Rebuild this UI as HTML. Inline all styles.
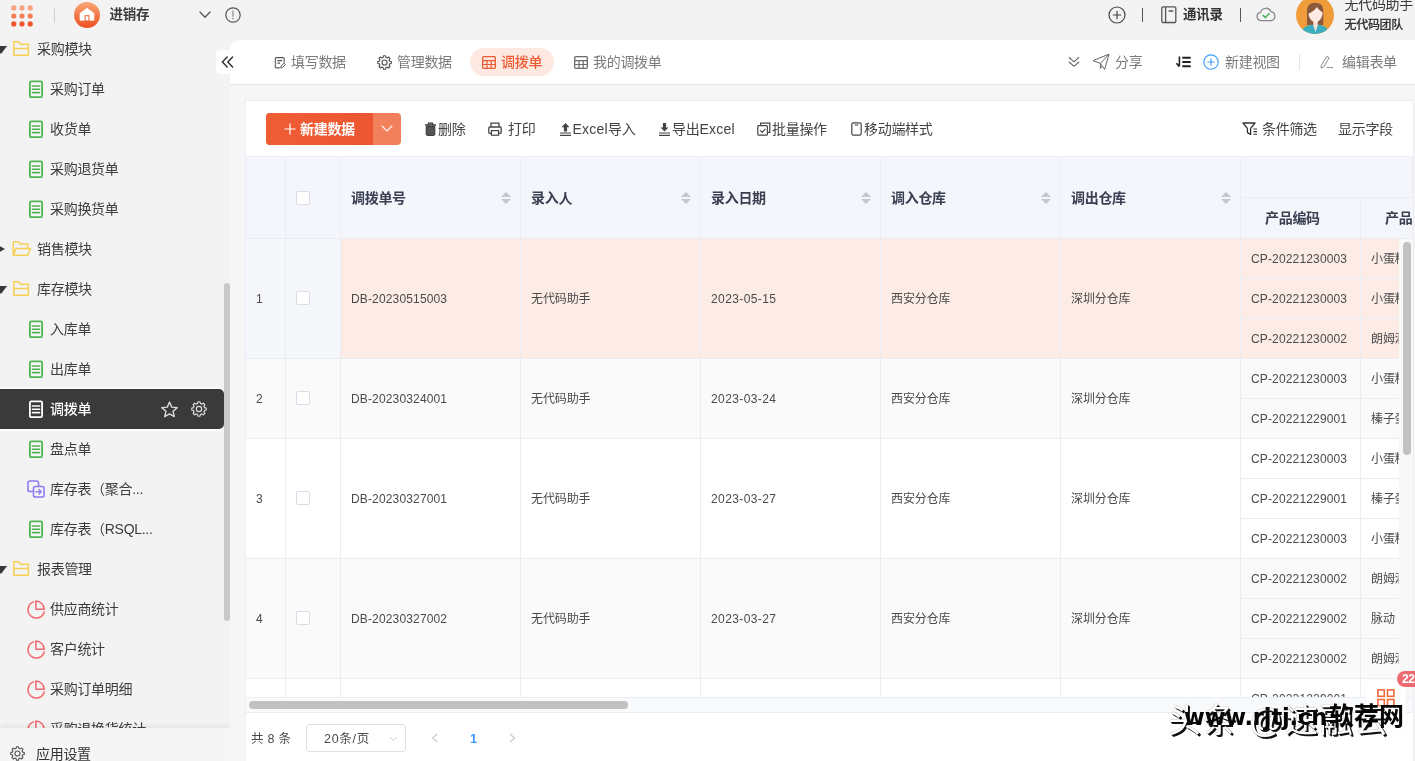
<!DOCTYPE html>
<html lang="zh-CN">
<head>
<meta charset="utf-8">
<title>进销存 - 调拨单</title>
<style>
*{box-sizing:border-box;margin:0;padding:0}
html,body{width:1415px;height:761px;overflow:hidden}
body{position:relative;background:#f3f3f3;font-family:"Liberation Sans","Noto Sans CJK SC",sans-serif;font-size:14px;color:#333;letter-spacing:-0.300px;-webkit-font-smoothing:antialiased}
.abs{position:absolute}
svg{display:block;overflow:visible}
/* top bar */
#top{position:absolute;left:0;top:0;width:1415px;height:40px;background:#f3f3f3}
.t{position:absolute;white-space:nowrap;line-height:20px}
/* sidebar */
#side{position:absolute;left:0;top:40px;width:230px;height:721px;background:#f3f3f3;overflow:hidden}
.it{position:absolute;left:0;width:224px;height:40px}
.it .tx{position:absolute;left:50px;top:10px;line-height:20px;font-size:14px;color:#3c3c3c;white-space:nowrap}
.it.g .tx{left:37px}
.it .ic{position:absolute;left:27px;top:11px;width:18px;height:18px}
.it.g .ic{left:12px}
.it.g .tri{position:absolute;left:-5.500px;top:17px;width:0;height:0;border-left:6px solid transparent;border-right:6px solid transparent;border-top:8px solid #3a3a3a}
.it.g.closed .tri{left:-2.500px;top:15.500px;border-top:4px solid transparent;border-bottom:4px solid transparent;border-left:7px solid #3a3a3a;border-right:0}
.it.act{background:#3a3a3a;border-radius:0 5px 5px 0;box-shadow:0 0 0 2px #fafafa}
.it.act .tx{color:#fff;font-weight:500}
/* main */
#tabbar{position:absolute;left:230px;top:40px;width:1185px;height:45px;background:#fff;border-radius:10px 0 0 0;border-bottom:1px solid #e4e4e4}
#mainbg{position:absolute;left:230px;top:85px;width:1185px;height:676px;background:#f6f6f6}
#card{position:absolute;left:245px;top:100px;width:1169px;height:670px;background:#fff;border:1px solid #ecedf6}
.tab{position:absolute;top:12px;line-height:20px;font-size:14px;color:#7a7a7a;white-space:nowrap}
.tb{position:absolute;top:119px;line-height:20px;font-size:14px;color:#333;white-space:nowrap}
/* table */
.hd{position:absolute;background:#f5f6fb;border-right:1px solid #ebedf5;border-bottom:1px solid #ebedf5}
.hd .h{position:absolute;left:10px;font-weight:bold;font-size:14px;color:#3a4052;line-height:20px;white-space:nowrap}
.sort{position:absolute;right:9px;width:10px;height:14px}
.sort:before,.sort:after{content:"";position:absolute;left:0;border-left:5px solid transparent;border-right:5px solid transparent}
.sort:before{top:0;border-bottom:5px solid #c3c7cf}
.sort:after{top:7px;border-top:5px solid #c3c7cf}
.c{position:absolute;border-right:1px solid #ebedf5;border-bottom:1px solid #ebedf5;font-size:12px;color:#4a4a4a;white-space:nowrap;overflow:hidden}
.c span{position:absolute;left:10px;line-height:20px;letter-spacing:-0.100px}
.c span.l{letter-spacing:0.150px}
.c span.d{letter-spacing:0.400px}
.cb{position:absolute;width:14px;height:14px;background:#fff;border:1px solid #d9dde8;border-radius:2px}
#root{position:absolute;left:0;top:0;width:1415px;height:761px;overflow:hidden;will-change:transform}
</style>
</head>
<body>
<div id="root">
<div id="top">
<div class="abs" style="left:0px;top:0px"><svg width="44" height="32" viewBox="0 0 44 32" style=""><circle cx="13.8" cy="7.9" r="2.6" fill="#f8a480"/><circle cx="22" cy="7.9" r="2.6" fill="#f8a480"/><circle cx="30.2" cy="7.9" r="2.6" fill="#f8a480"/><circle cx="13.8" cy="16" r="2.6" fill="#f47d55"/><circle cx="22" cy="16" r="2.6" fill="#f47d55"/><circle cx="30.2" cy="16" r="2.6" fill="#f47d55"/><circle cx="13.8" cy="23.9" r="2.6" fill="#f0562d"/><circle cx="22" cy="23.9" r="2.6" fill="#f0562d"/><circle cx="30.2" cy="23.9" r="2.6" fill="#f0562d"/></svg></div>
<div class="abs" style="left:54px;top:8px;width:1px;height:15px;background:#cfcfcf"></div>
<div class="abs" style="left:74px;top:2px"><svg width="26" height="26" viewBox="0 0 26 26" style=""><defs><linearGradient id="hg" x1="0" y1="0" x2="0" y2="1"><stop offset="0" stop-color="#f8a777"/><stop offset="1" stop-color="#ee4d20"/></linearGradient></defs><circle cx="13" cy="13" r="13" fill="url(#hg)"/><path d="M13 6.300L19.900 11.400V18.200H6.100V11.400Z" fill="#fff" stroke="#fff" stroke-width="0.800" stroke-linejoin="round"/><rect x="11.100" y="13.700" width="3.800" height="5.200" fill="#fff" stroke="#f0703f" stroke-width="1.100"/></svg></div>
<div class="t" style="left:109.5px;top:5.0px;font-size:13.5px;color:#3a3a3a;font-weight:bold;">进销存</div>
<div class="abs" style="left:199px;top:11px"><svg width="12" height="8" viewBox="0 0 12 8" style=""><path d="M1 1l5 5.2L11 1" fill="none" stroke="#555" stroke-width="1.3" stroke-linecap="round" stroke-linejoin="round"/></svg></div>
<div class="abs" style="left:225px;top:7px"><svg width="16" height="16" viewBox="0 0 16 16" style=""><circle cx="8" cy="8" r="7.2" fill="none" stroke="#555" stroke-width="1.2"/><path d="M8 4v5.2" stroke="#999" stroke-width="1.4" stroke-linecap="round"/><circle cx="8" cy="11.6" r="0.9" fill="#999"/></svg></div>
<div class="abs" style="left:1108px;top:6px"><svg width="18" height="18" viewBox="0 0 18 18" style=""><circle cx="9" cy="9" r="8" fill="none" stroke="#444" stroke-width="1.2"/><path d="M9 5.3v7.4M5.3 9h7.4" stroke="#444" stroke-width="1.2" stroke-linecap="round"/></svg></div>
<div class="abs" style="left:1142px;top:8px;width:1px;height:14px;background:#555"></div>
<div class="abs" style="left:1161px;top:6px"><svg width="16" height="18" viewBox="0 0 16 18" style=""><rect x="0.8" y="0.8" width="14" height="15.6" rx="1.2" fill="none" stroke="#555" stroke-width="1.3"/><path d="M4.6 0.8v15.6M7.6 5h4.6" stroke="#555" stroke-width="1.3" fill="none"/><path d="M1.5 17.6h13" stroke="#bbb" stroke-width="1"/></svg></div>
<div class="t" style="left:1183px;top:5.0px;font-size:13.5px;color:#333;font-weight:bold;">通讯录</div>
<div class="abs" style="left:1240px;top:8px;width:1px;height:14px;background:#555"></div>
<div class="abs" style="left:1256px;top:7px"><svg width="20" height="15" viewBox="0 0 20 15" style=""><path d="M5 13.6a4.2 4.2 0 0 1-.5-8.3A5.6 5.6 0 0 1 15 4.6a4.6 4.6 0 0 1 .4 9z" fill="#f3f3f3" stroke="#8a8a8a" stroke-width="1.3" stroke-linejoin="round"/><path d="M7.2 8.4l2.2 2.2 3.8-4" fill="none" stroke="#4cb85c" stroke-width="1.5" stroke-linecap="round" stroke-linejoin="round"/></svg></div>
<div class="abs" style="left:1296px;top:-4px"><svg width="38" height="38" viewBox="0 0 38 38" style=""><defs><clipPath id="av"><circle cx="19" cy="19" r="19"/></clipPath></defs><g clip-path="url(#av)"><rect width="38" height="38" fill="#f09c3b"/><path d="M11 29V15C11 9.500 14 6.800 19.200 6.800C24.500 6.800 27.300 9.500 27.300 15V29Z" fill="#8b5a3d"/><path d="M5 38C6 31.500 11 29.500 16.500 28.600L19.500 31L22.500 28.600C28 29.500 32 31.500 33 38Z" fill="#3bafc0"/><path d="M17.300 22H21.700V29.500L19.500 36L17.300 29.500Z" fill="#fbe3d8"/><path d="M12.600 17.500C15.500 16.500 19 14 20.800 11C22.500 13.500 25 15.500 26.600 16.200C26.800 21 23.500 26.200 19.800 26.200C16 26.200 12.600 22 12.600 17.500Z" fill="#fdebe3"/></g></svg></div>
<div class="t" style="left:1344.5px;top:-6.0px;font-size:14px;color:#3a3a3a;font-weight:normal;">无代码助手</div>
<div class="t" style="left:1344.5px;top:15.0px;font-size:12px;color:#333;font-weight:500;-webkit-text-stroke:0.200px #333">无代码团队</div>
</div>
<div id="side">
<div class="it g" style="top:-11px"><i class="tri"></i><div class="ic"><svg width="18" height="18" viewBox="0 0 18 18" style=""><path d="M1.850 15.250V1.750H6.800L8.600 4.200H16.350V15.250Z" fill="none" stroke="#f6d055" stroke-width="1.500" stroke-linejoin="round"/><path d="M1.850 8.500H16.350" stroke="#f6d055" stroke-width="1.400"/></svg></div><div class="tx">采购模块</div></div>
<div class="it" style="top:29px"><div class="ic"><svg width="18" height="18" viewBox="0 0 18 18" style=""><rect x="2.900" y="1.400" width="12.200" height="15.800" rx="1.400" fill="#fbf6fb" stroke="#4db550" stroke-width="1.800"/><path d="M5.400 6h7.200M5.400 9.300h7.200M5.400 12.600h7.200" stroke="#4db550" stroke-width="1.600" stroke-linecap="round" fill="none"/></svg></div><div class="tx">采购订单</div></div>
<div class="it" style="top:69px"><div class="ic"><svg width="18" height="18" viewBox="0 0 18 18" style=""><rect x="2.900" y="1.400" width="12.200" height="15.800" rx="1.400" fill="#fbf6fb" stroke="#4db550" stroke-width="1.800"/><path d="M5.400 6h7.200M5.400 9.300h7.200M5.400 12.600h7.200" stroke="#4db550" stroke-width="1.600" stroke-linecap="round" fill="none"/></svg></div><div class="tx">收货单</div></div>
<div class="it" style="top:109px"><div class="ic"><svg width="18" height="18" viewBox="0 0 18 18" style=""><rect x="2.900" y="1.400" width="12.200" height="15.800" rx="1.400" fill="#fbf6fb" stroke="#4db550" stroke-width="1.800"/><path d="M5.400 6h7.200M5.400 9.300h7.200M5.400 12.600h7.200" stroke="#4db550" stroke-width="1.600" stroke-linecap="round" fill="none"/></svg></div><div class="tx">采购退货单</div></div>
<div class="it" style="top:149px"><div class="ic"><svg width="18" height="18" viewBox="0 0 18 18" style=""><rect x="2.900" y="1.400" width="12.200" height="15.800" rx="1.400" fill="#fbf6fb" stroke="#4db550" stroke-width="1.800"/><path d="M5.400 6h7.200M5.400 9.300h7.200M5.400 12.600h7.200" stroke="#4db550" stroke-width="1.600" stroke-linecap="round" fill="none"/></svg></div><div class="tx">采购换货单</div></div>
<div class="it g closed" style="top:189px"><i class="tri"></i><div class="ic"><svg width="20" height="18" viewBox="0 0 20 18" style=""><path d="M1.300 15.250V1.750H6.300L8.100 4.100H15.600V8.200" fill="none" stroke="#f6d055" stroke-width="1.500" stroke-linejoin="round"/><path d="M1.300 15.250L4 8.400H18.400L15.800 15.250Z" fill="none" stroke="#f6d055" stroke-width="1.500" stroke-linejoin="round"/></svg></div><div class="tx">销售模块</div></div>
<div class="it g" style="top:229px"><i class="tri"></i><div class="ic"><svg width="18" height="18" viewBox="0 0 18 18" style=""><path d="M1.850 15.250V1.750H6.800L8.600 4.200H16.350V15.250Z" fill="none" stroke="#f6d055" stroke-width="1.500" stroke-linejoin="round"/><path d="M1.850 8.500H16.350" stroke="#f6d055" stroke-width="1.400"/></svg></div><div class="tx">库存模块</div></div>
<div class="it" style="top:269px"><div class="ic"><svg width="18" height="18" viewBox="0 0 18 18" style=""><rect x="2.900" y="1.400" width="12.200" height="15.800" rx="1.400" fill="#fbf6fb" stroke="#4db550" stroke-width="1.800"/><path d="M5.400 6h7.200M5.400 9.300h7.200M5.400 12.600h7.200" stroke="#4db550" stroke-width="1.600" stroke-linecap="round" fill="none"/></svg></div><div class="tx">入库单</div></div>
<div class="it" style="top:309px"><div class="ic"><svg width="18" height="18" viewBox="0 0 18 18" style=""><rect x="2.900" y="1.400" width="12.200" height="15.800" rx="1.400" fill="#fbf6fb" stroke="#4db550" stroke-width="1.800"/><path d="M5.400 6h7.200M5.400 9.300h7.200M5.400 12.600h7.200" stroke="#4db550" stroke-width="1.600" stroke-linecap="round" fill="none"/></svg></div><div class="tx">出库单</div></div>
<div class="it act" style="top:349px"><div class="ic"><svg width="18" height="18" viewBox="0 0 18 18" style=""><rect x="2.900" y="1.400" width="12.200" height="15.800" rx="1.400" fill="none" stroke="#fff" stroke-width="1.800"/><path d="M5.400 6h7.200M5.400 9.300h7.200M5.400 12.600h7.200" stroke="#fff" stroke-width="1.600" stroke-linecap="round" fill="none"/></svg></div><div class="tx">调拨单</div><div class="abs" style="left:161px;top:12px"><svg width="17" height="17" viewBox="0 0 16 16" style=""><path d="M8.00 1.00 L10.06 5.77 L15.23 6.25 L11.33 9.68 L12.47 14.75 L8.00 12.10 L3.53 14.75 L4.67 9.68 L0.77 6.25 L5.94 5.77Z" fill="none" stroke="#ddd" stroke-width="1.3" stroke-linejoin="round"/></svg></div><div class="abs" style="left:191px;top:12px"><svg width="16" height="16" viewBox="0 0 16 16" style=""><path d="M6.97 0.77 L9.03 0.77 L9.42 2.48 L10.90 3.09 L12.38 2.16 L13.84 3.62 L12.91 5.10 L13.52 6.58 L15.23 6.97 L15.23 9.03 L13.52 9.42 L12.91 10.90 L13.84 12.38 L12.38 13.84 L10.90 12.91 L9.42 13.52 L9.03 15.23 L6.97 15.23 L6.58 13.52 L5.10 12.91 L3.62 13.84 L2.16 12.38 L3.09 10.90 L2.48 9.42 L0.77 9.03 L0.77 6.97 L2.48 6.58 L3.09 5.10 L2.16 3.62 L3.62 2.16 L5.10 3.09 L6.58 2.48Z" fill="none" stroke="#ddd" stroke-width="1.2" stroke-linejoin="round"/><circle cx="8" cy="8" r="2.7" fill="none" stroke="#ddd" stroke-width="1.2"/></svg></div></div>
<div class="it" style="top:389px"><div class="ic"><svg width="18" height="18" viewBox="0 0 18 18" style=""><rect x="2.900" y="1.400" width="12.200" height="15.800" rx="1.400" fill="#fbf6fb" stroke="#4db550" stroke-width="1.800"/><path d="M5.400 6h7.200M5.400 9.300h7.200M5.400 12.600h7.200" stroke="#4db550" stroke-width="1.600" stroke-linecap="round" fill="none"/></svg></div><div class="tx">盘点单</div></div>
<div class="it" style="top:429px"><div class="ic"><svg width="18" height="18" viewBox="0 0 18 18" style=""><rect x="1" y="1" width="10.5" height="10.5" rx="1.8" fill="none" stroke="#8c7df2" stroke-width="1.6"/><rect x="6.5" y="6.5" width="10.5" height="10.5" rx="1.8" fill="#f3f3f3" stroke="#8c7df2" stroke-width="1.6"/><path d="M9 11.8h5M12 9.6l2.2 2.2L12 14" fill="none" stroke="#8c7df2" stroke-width="1.4" stroke-linecap="round" stroke-linejoin="round"/></svg></div><div class="tx">库存表（聚合...</div></div>
<div class="it" style="top:469px"><div class="ic"><svg width="18" height="18" viewBox="0 0 18 18" style=""><rect x="2.900" y="1.400" width="12.200" height="15.800" rx="1.400" fill="#fbf6fb" stroke="#4db550" stroke-width="1.800"/><path d="M5.400 6h7.200M5.400 9.300h7.200M5.400 12.600h7.200" stroke="#4db550" stroke-width="1.600" stroke-linecap="round" fill="none"/></svg></div><div class="tx">库存表（RSQL...</div></div>
<div class="it g" style="top:509px"><i class="tri"></i><div class="ic"><svg width="18" height="18" viewBox="0 0 18 18" style=""><path d="M1.850 15.250V1.750H6.800L8.600 4.200H16.350V15.250Z" fill="none" stroke="#f6d055" stroke-width="1.500" stroke-linejoin="round"/><path d="M1.850 8.500H16.350" stroke="#f6d055" stroke-width="1.400"/></svg></div><div class="tx">报表管理</div></div>
<div class="it" style="top:549px"><div class="ic"><svg width="18" height="18" viewBox="0 0 18 18" style=""><path d="M6.600 1.900A8.300 8.300 0 1 0 17.300 12" fill="none" stroke="#f2676d" stroke-width="1.500" stroke-linecap="round"/><path d="M8.900 9.300V1.100A8.300 8.300 0 0 1 17.200 9.300Z" fill="none" stroke="#f2676d" stroke-width="1.500" stroke-linejoin="round"/></svg></div><div class="tx">供应商统计</div></div>
<div class="it" style="top:589px"><div class="ic"><svg width="18" height="18" viewBox="0 0 18 18" style=""><path d="M6.600 1.900A8.300 8.300 0 1 0 17.300 12" fill="none" stroke="#f2676d" stroke-width="1.500" stroke-linecap="round"/><path d="M8.900 9.300V1.100A8.300 8.300 0 0 1 17.200 9.300Z" fill="none" stroke="#f2676d" stroke-width="1.500" stroke-linejoin="round"/></svg></div><div class="tx">客户统计</div></div>
<div class="it" style="top:629px"><div class="ic"><svg width="18" height="18" viewBox="0 0 18 18" style=""><path d="M6.600 1.900A8.300 8.300 0 1 0 17.300 12" fill="none" stroke="#f2676d" stroke-width="1.500" stroke-linecap="round"/><path d="M8.900 9.300V1.100A8.300 8.300 0 0 1 17.200 9.300Z" fill="none" stroke="#f2676d" stroke-width="1.500" stroke-linejoin="round"/></svg></div><div class="tx">采购订单明细</div></div>
<div class="it" style="top:669px"><div class="ic"><svg width="18" height="18" viewBox="0 0 18 18" style=""><path d="M6.600 1.900A8.300 8.300 0 1 0 17.300 12" fill="none" stroke="#f2676d" stroke-width="1.500" stroke-linecap="round"/><path d="M8.900 9.300V1.100A8.300 8.300 0 0 1 17.200 9.300Z" fill="none" stroke="#f2676d" stroke-width="1.500" stroke-linejoin="round"/></svg></div><div class="tx">采购退换货统计</div></div>
<div class="abs" style="left:224px;top:243px;width:6px;height:338px;border-radius:3px;background:#c9c9c9"></div>
<div class="abs" style="left:0;top:688px;width:230px;height:33px;background:#f5f5f5;box-shadow:0 -2px 5px rgba(0,0,0,0.07)"></div>
<div class="abs" style="left:10px;top:706px"><svg width="15" height="15" viewBox="0 0 16 16" style=""><path d="M6.97 0.77 L9.03 0.77 L9.42 2.48 L10.90 3.09 L12.38 2.16 L13.84 3.62 L12.91 5.10 L13.52 6.58 L15.23 6.97 L15.23 9.03 L13.52 9.42 L12.91 10.90 L13.84 12.38 L12.38 13.84 L10.90 12.91 L9.42 13.52 L9.03 15.23 L6.97 15.23 L6.58 13.52 L5.10 12.91 L3.62 13.84 L2.16 12.38 L3.09 10.90 L2.48 9.42 L0.77 9.03 L0.77 6.97 L2.48 6.58 L3.09 5.10 L2.16 3.62 L3.62 2.16 L5.10 3.09 L6.58 2.48Z" fill="none" stroke="#555" stroke-width="1.2" stroke-linejoin="round"/><circle cx="8" cy="8" r="2.7" fill="none" stroke="#555" stroke-width="1.2"/></svg></div>
<div class="t" style="left:36px;top:704px;font-size:14px;color:#333">应用设置</div>
</div>
<div id="tabbar">
</div>
<div class="abs" style="left:216px;top:50px;width:18px;height:24px;background:#fff;border-radius:4px 0 0 4px"></div>
<div class="abs" style="left:221px;top:56px"><svg width="13" height="12" viewBox="0 0 13 12" style=""><path d="M6.2 1L1.4 6l4.800 5M11.600 1L6.800 6l4.800 5" fill="none" stroke="#333" stroke-width="1.5" stroke-linecap="round" stroke-linejoin="round"/></svg></div>
<div class="abs" style="left:273.5px;top:55.5px"><svg width="11.5" height="13.5" viewBox="0 0 13 14" style=""><path d="M11.500 7V2.200a1 1 0 0 0-1-1h-8a1 1 0 0 0-1 1v9.600a1 1 0 0 0 1 1h4" fill="none" stroke="#555" stroke-width="1.2"/><path d="M3.800 4.600h5.400M3.800 7.400h3" stroke="#555" stroke-width="1.2"/><path d="M7.600 12.800l.4-2 3.400-3.300 1.500 1.500-3.400 3.400z" fill="none" stroke="#555" stroke-width="1.100" stroke-linejoin="round"/></svg></div>
<div class="t" style="left:291px;top:52.0px;font-size:14px;color:#7b7b7b;font-weight:normal;">填写数据</div>
<div class="abs" style="left:376.5px;top:54.5px"><svg width="15" height="15" viewBox="0 0 16 16" style=""><path d="M6.97 0.77 L9.03 0.77 L9.42 2.48 L10.90 3.09 L12.38 2.16 L13.84 3.62 L12.91 5.10 L13.52 6.58 L15.23 6.97 L15.23 9.03 L13.52 9.42 L12.91 10.90 L13.84 12.38 L12.38 13.84 L10.90 12.91 L9.42 13.52 L9.03 15.23 L6.97 15.23 L6.58 13.52 L5.10 12.91 L3.62 13.84 L2.16 12.38 L3.09 10.90 L2.48 9.42 L0.77 9.03 L0.77 6.97 L2.48 6.58 L3.09 5.10 L2.16 3.62 L3.62 2.16 L5.10 3.09 L6.58 2.48Z" fill="none" stroke="#555" stroke-width="1.25" stroke-linejoin="round"/><circle cx="8" cy="8" r="2.7" fill="none" stroke="#555" stroke-width="1.25"/></svg></div>
<div class="t" style="left:397px;top:52.0px;font-size:14px;color:#7b7b7b;font-weight:normal;">管理数据</div>
<div class="abs" style="left:470px;top:48px;width:84px;height:28px;border-radius:14px;background:#fde9e1"></div>
<div class="abs" style="left:482px;top:55.5px"><svg width="14" height="13" viewBox="0 0 14 13" style=""><rect x="0.700" y="0.700" width="12.600" height="11.600" rx="1" fill="none" stroke="#ee5a31" stroke-width="1.300"/><path d="M0.700 4.600h12.600M0.700 8.500h12.600M5 4.600v7.700M9.200 4.600v7.700" stroke="#ee5a31" stroke-width="1.200" fill="none"/></svg></div>
<div class="t" style="left:501px;top:52.0px;font-size:14px;color:#ee5a31;font-weight:500;">调拨单</div>
<div class="abs" style="left:574px;top:55.5px"><svg width="14" height="13" viewBox="0 0 14 13" style=""><rect x="0.700" y="0.700" width="12.600" height="11.600" rx="1" fill="none" stroke="#6a6a6a" stroke-width="1.300"/><path d="M0.700 4.600h12.600M0.700 8.500h12.600M5 4.600v7.700M9.200 4.600v7.700" stroke="#6a6a6a" stroke-width="1.200" fill="none"/></svg></div>
<div class="t" style="left:593px;top:52.0px;font-size:14px;color:#7b7b7b;font-weight:normal;">我的调拨单</div>
<div class="abs" style="left:1068px;top:56px"><svg width="12" height="12" viewBox="0 0 12 12" style=""><path d="M1.200 1.500L6 5.800l4.800-4.300M1.200 6L6 10.300 10.800 6" fill="none" stroke="#666" stroke-width="1.100" stroke-linecap="round" stroke-linejoin="round"/></svg></div>
<div class="abs" style="left:1092px;top:53px"><svg width="18" height="18" viewBox="0 0 18 18" style=""><path d="M1 7.600L17 1.200 12.600 16.400 8.400 10.400z" fill="none" stroke="#666" stroke-width="1" stroke-linejoin="round"/><path d="M17 1.200L8.400 10.400v5l2.200-2.400" fill="none" stroke="#666" stroke-width="1" stroke-linejoin="round"/></svg></div>
<div class="t" style="left:1115px;top:52.0px;font-size:14px;color:#7b7b7b;font-weight:normal;">分享</div>
<div class="abs" style="left:1176px;top:56px"><svg width="15" height="12" viewBox="0 0 15 12" style=""><path d="M6.300 1.700h8.400M6.300 6h8.400M6.300 10.300h8.400" stroke="#222" stroke-width="2"/><path d="M3.400 0.500v9.500M0.400 7.200l3 3.400" fill="none" stroke="#222" stroke-width="1.600"/></svg></div>
<div class="abs" style="left:1203px;top:54px"><svg width="16" height="16" viewBox="0 0 16 16" style=""><circle cx="8" cy="8" r="7.200" fill="none" stroke="#409eff" stroke-width="1.150"/><path d="M8 4.800v6.400M4.800 8h6.400" stroke="#409eff" stroke-width="1.150" stroke-linecap="round"/></svg></div>
<div class="t" style="left:1225px;top:52.0px;font-size:14px;color:#7b7b7b;font-weight:normal;">新建视图</div>
<div class="abs" style="left:1299px;top:54px;width:1px;height:16px;background:#e3e6ee"></div>
<div class="abs" style="left:1320px;top:55px"><svg width="14" height="14" viewBox="0 0 14 14" style=""><path d="M1.400 10.400L6.800 1.400L9.100 2.800L3.800 11.800L1 12.800Z" fill="none" stroke="#888" stroke-width="1" stroke-linejoin="round"/><path d="M6.500 12.600H13" stroke="#888" stroke-width="1"/></svg></div>
<div class="t" style="left:1342px;top:52.0px;font-size:14px;color:#7b7b7b;font-weight:normal;">编辑表单</div>
<div id="mainbg"></div>
<div id="card"></div>
<div class="abs" style="left:266px;top:113px;width:135px;height:32px;border-radius:4px;background:#f3805c;overflow:hidden"><div class="abs" style="left:0;top:0;width:107px;height:32px;background:linear-gradient(90deg,#ef5d35,#ec5630)"></div></div>
<div class="abs" style="left:284px;top:123px"><svg width="12" height="12" viewBox="0 0 12 12" style=""><path d="M6 0.500v11M0.500 6h11" stroke="#fff" stroke-width="1.200"/></svg></div>
<div class="t" style="left:300px;top:119.0px;font-size:14px;color:#fff;font-weight:bold;">新建数据</div>
<div class="abs" style="left:381px;top:125px"><svg width="12" height="8" viewBox="0 0 12 8" style=""><path d="M1 1l5 5L11 1" fill="none" stroke="#fff" stroke-width="1.100" stroke-linecap="round" stroke-linejoin="round" opacity="0.920"/></svg></div>
<div class="abs" style="left:424px;top:122px"><svg width="13" height="14" viewBox="0 0 13 14" style=""><path d="M1 3h11M4.500 3V1.200h4V3" fill="none" stroke="#333" stroke-width="1.300"/><path d="M2.200 4.600h8.600v7.600a1.200 1.200 0 0 1-1.200 1.200H3.400a1.200 1.200 0 0 1-1.200-1.200z" fill="#555" stroke="#333" stroke-width="1"/></svg></div>
<div class="t" style="left:438px;top:119.0px;font-size:14px;color:#444;font-weight:normal;">删除</div>
<div class="abs" style="left:488px;top:122px"><svg width="14" height="14" viewBox="0 0 14 14" style=""><path d="M3 5V1.200h8V5" fill="none" stroke="#444" stroke-width="1.300"/><rect x="0.800" y="5" width="12.400" height="6.400" rx="1.200" fill="none" stroke="#444" stroke-width="1.300"/><rect x="3.400" y="8.600" width="7.200" height="4.600" fill="#fff" stroke="#444" stroke-width="1.200"/></svg></div>
<div class="t" style="left:508px;top:119.0px;font-size:14px;color:#444;font-weight:normal;">打印</div>
<div class="abs" style="left:559px;top:122px"><svg width="13" height="14" viewBox="0 0 13 14" style=""><path d="M6.500 1L2.500 5.200h2.400V9.600h3.200V5.200h2.400z" fill="#444"/><path d="M1 11h11M1 13.300h11" stroke="#444" stroke-width="1.200"/></svg></div>
<div class="t" style="left:572.5px;top:119.0px;font-size:14px;color:#444;font-weight:normal;"><span style="letter-spacing:0.250px">Excel</span>导入</div>
<div class="abs" style="left:658px;top:122px"><svg width="13" height="14" viewBox="0 0 13 14" style=""><path d="M6.500 9.600L2.500 5.400h2.400V1h3.200v4.400h2.400z" fill="#444"/><path d="M1 11h11M1 13.300h11" stroke="#444" stroke-width="1.200"/></svg></div>
<div class="t" style="left:672px;top:119.0px;font-size:14px;color:#444;font-weight:normal;">导出<span style="letter-spacing:0.250px">Excel</span></div>
<div class="abs" style="left:757px;top:122px"><svg width="14" height="14" viewBox="0 0 14 14" style=""><path d="M3.600 3.400V1.200h9.200v9.200h-2.200" fill="none" stroke="#444" stroke-width="1.200"/><rect x="0.800" y="3.600" width="9.600" height="9.600" rx="1" fill="none" stroke="#444" stroke-width="1.200"/><path d="M3.200 8.400l2 2 3.200-3.600" fill="none" stroke="#444" stroke-width="1.200"/></svg></div>
<div class="t" style="left:772px;top:119.0px;font-size:14px;color:#444;font-weight:normal;">批量操作</div>
<div class="abs" style="left:851px;top:122px"><svg width="11" height="14" viewBox="0 0 11 14" style=""><rect x="0.800" y="0.800" width="9.400" height="12.400" rx="1.600" fill="none" stroke="#444" stroke-width="1.200"/><path d="M3.800 3h3.400" stroke="#444" stroke-width="1.100"/></svg></div>
<div class="t" style="left:864px;top:119.0px;font-size:14px;color:#444;font-weight:normal;">移动端样式</div>
<div class="abs" style="left:1242px;top:122px"><svg width="16" height="14" viewBox="0 0 16 14" style=""><path d="M1 1h12L8.600 6.400v6L5.400 10.600V6.400z" fill="none" stroke="#333" stroke-width="1.300" stroke-linejoin="round"/><path d="M11.400 7h3.600M11.400 9.600h3.600M11.400 12.200h3.600" stroke="#333" stroke-width="1.100"/></svg></div>
<div class="t" style="left:1262px;top:119.0px;font-size:14px;color:#444;font-weight:normal;">条件筛选</div>
<div class="t" style="left:1338px;top:119.0px;font-size:14px;color:#444;font-weight:normal;">显示字段</div>
<div class="abs" id="tbl" style="left:246px;top:156px;width:1167px;height:541px;overflow:hidden;border-top:1px solid #ebedf5">
<div class="hd" style="left:0px;top:0px;width:40px;height:82px"></div>
<div class="hd" style="left:40px;top:0;width:55px;height:82px"><i class="cb" style="left:10px;top:34px"></i></div>
<div class="hd" style="left:95px;top:0px;width:180px;height:82px"><div class="h" style="top:30.5px;">调拨单号</div><i class="sort" style="top:35.0px"></i></div>
<div class="hd" style="left:275px;top:0px;width:180px;height:82px"><div class="h" style="top:30.5px;">录入人</div><i class="sort" style="top:35.0px"></i></div>
<div class="hd" style="left:455px;top:0px;width:180px;height:82px"><div class="h" style="top:30.5px;">录入日期</div><i class="sort" style="top:35.0px"></i></div>
<div class="hd" style="left:635px;top:0px;width:180px;height:82px"><div class="h" style="top:30.5px;">调入仓库</div><i class="sort" style="top:35.0px"></i></div>
<div class="hd" style="left:815px;top:0px;width:180px;height:82px"><div class="h" style="top:30.5px;">调出仓库</div><i class="sort" style="top:35.0px"></i></div>
<div class="hd" style="left:995px;top:0;width:172px;height:41px"></div>
<div class="hd" style="left:995px;top:41px;width:120px;height:41px"><div class="h" style="top:10.0px;left:24px">产品编码</div></div>
<div class="hd" style="left:1115px;top:41px;width:120px;height:41px"><div class="h" style="top:10.0px;left:24px">产品名称</div></div>
<div class="c" style="left:0px;top:82px;width:40px;height:120px;background:#f5f7fb"><span class="l" style="top:50.0px">1</span></div>
<div class="c" style="left:40px;top:82px;width:55px;height:120px;background:#f5f7fb"><i class="cb" style="left:10px;top:52.0px"></i></div>
<div class="c" style="left:95px;top:82px;width:180px;height:120px;background:#fdece5"><span class="l" style="top:50.0px">DB-20230515003</span></div>
<div class="c" style="left:275px;top:82px;width:180px;height:120px;background:#fdece5"><span style="top:50.0px">无代码助手</span></div>
<div class="c" style="left:455px;top:82px;width:180px;height:120px;background:#fdece5"><span class="l d" style="top:50.0px">2023-05-15</span></div>
<div class="c" style="left:635px;top:82px;width:180px;height:120px;background:#fdece5"><span style="top:50.0px">西安分仓库</span></div>
<div class="c" style="left:815px;top:82px;width:180px;height:120px;background:#fdece5"><span style="top:50.0px">深圳分仓库</span></div>
<div class="c" style="left:995px;top:82px;width:120px;height:40px;background:#fdece5"><span class="l" style="top:10.0px">CP-20221230003</span></div>
<div class="c" style="left:1115px;top:82px;width:120px;height:40px;background:#fdece5"><span style="top:10.0px">小蛋糕</span></div>
<div class="c" style="left:995px;top:122px;width:120px;height:40px;background:#fdece5"><span class="l" style="top:10.0px">CP-20221230003</span></div>
<div class="c" style="left:1115px;top:122px;width:120px;height:40px;background:#fdece5"><span style="top:10.0px">小蛋糕</span></div>
<div class="c" style="left:995px;top:162px;width:120px;height:40px;background:#fdece5"><span class="l" style="top:10.0px">CP-20221230002</span></div>
<div class="c" style="left:1115px;top:162px;width:120px;height:40px;background:#fdece5"><span style="top:10.0px">朗姆酒</span></div>
<div class="c" style="left:0px;top:202px;width:40px;height:80px;background:#fafafa"><span class="l" style="top:30.0px">2</span></div>
<div class="c" style="left:40px;top:202px;width:55px;height:80px;background:#fafafa"><i class="cb" style="left:10px;top:32.0px"></i></div>
<div class="c" style="left:95px;top:202px;width:180px;height:80px;background:#fafafa"><span class="l" style="top:30.0px">DB-20230324001</span></div>
<div class="c" style="left:275px;top:202px;width:180px;height:80px;background:#fafafa"><span style="top:30.0px">无代码助手</span></div>
<div class="c" style="left:455px;top:202px;width:180px;height:80px;background:#fafafa"><span class="l d" style="top:30.0px">2023-03-24</span></div>
<div class="c" style="left:635px;top:202px;width:180px;height:80px;background:#fafafa"><span style="top:30.0px">西安分仓库</span></div>
<div class="c" style="left:815px;top:202px;width:180px;height:80px;background:#fafafa"><span style="top:30.0px">深圳分仓库</span></div>
<div class="c" style="left:995px;top:202px;width:120px;height:40px;background:#fafafa"><span class="l" style="top:10.0px">CP-20221230003</span></div>
<div class="c" style="left:1115px;top:202px;width:120px;height:40px;background:#fafafa"><span style="top:10.0px">小蛋糕</span></div>
<div class="c" style="left:995px;top:242px;width:120px;height:40px;background:#fafafa"><span class="l" style="top:10.0px">CP-20221229001</span></div>
<div class="c" style="left:1115px;top:242px;width:120px;height:40px;background:#fafafa"><span style="top:10.0px">榛子蛋糕</span></div>
<div class="c" style="left:0px;top:282px;width:40px;height:120px;background:#fff"><span class="l" style="top:50.0px">3</span></div>
<div class="c" style="left:40px;top:282px;width:55px;height:120px;background:#fff"><i class="cb" style="left:10px;top:52.0px"></i></div>
<div class="c" style="left:95px;top:282px;width:180px;height:120px;background:#fff"><span class="l" style="top:50.0px">DB-20230327001</span></div>
<div class="c" style="left:275px;top:282px;width:180px;height:120px;background:#fff"><span style="top:50.0px">无代码助手</span></div>
<div class="c" style="left:455px;top:282px;width:180px;height:120px;background:#fff"><span class="l d" style="top:50.0px">2023-03-27</span></div>
<div class="c" style="left:635px;top:282px;width:180px;height:120px;background:#fff"><span style="top:50.0px">西安分仓库</span></div>
<div class="c" style="left:815px;top:282px;width:180px;height:120px;background:#fff"><span style="top:50.0px">深圳分仓库</span></div>
<div class="c" style="left:995px;top:282px;width:120px;height:40px;background:#fff"><span class="l" style="top:10.0px">CP-20221230003</span></div>
<div class="c" style="left:1115px;top:282px;width:120px;height:40px;background:#fff"><span style="top:10.0px">小蛋糕</span></div>
<div class="c" style="left:995px;top:322px;width:120px;height:40px;background:#fff"><span class="l" style="top:10.0px">CP-20221229001</span></div>
<div class="c" style="left:1115px;top:322px;width:120px;height:40px;background:#fff"><span style="top:10.0px">榛子蛋糕</span></div>
<div class="c" style="left:995px;top:362px;width:120px;height:40px;background:#fff"><span class="l" style="top:10.0px">CP-20221230003</span></div>
<div class="c" style="left:1115px;top:362px;width:120px;height:40px;background:#fff"><span style="top:10.0px">小蛋糕</span></div>
<div class="c" style="left:0px;top:402px;width:40px;height:120px;background:#fafafa"><span class="l" style="top:50.0px">4</span></div>
<div class="c" style="left:40px;top:402px;width:55px;height:120px;background:#fafafa"><i class="cb" style="left:10px;top:52.0px"></i></div>
<div class="c" style="left:95px;top:402px;width:180px;height:120px;background:#fafafa"><span class="l" style="top:50.0px">DB-20230327002</span></div>
<div class="c" style="left:275px;top:402px;width:180px;height:120px;background:#fafafa"><span style="top:50.0px">无代码助手</span></div>
<div class="c" style="left:455px;top:402px;width:180px;height:120px;background:#fafafa"><span class="l d" style="top:50.0px">2023-03-27</span></div>
<div class="c" style="left:635px;top:402px;width:180px;height:120px;background:#fafafa"><span style="top:50.0px">西安分仓库</span></div>
<div class="c" style="left:815px;top:402px;width:180px;height:120px;background:#fafafa"><span style="top:50.0px">深圳分仓库</span></div>
<div class="c" style="left:995px;top:402px;width:120px;height:40px;background:#fafafa"><span class="l" style="top:10.0px">CP-20221230002</span></div>
<div class="c" style="left:1115px;top:402px;width:120px;height:40px;background:#fafafa"><span style="top:10.0px">朗姆酒</span></div>
<div class="c" style="left:995px;top:442px;width:120px;height:40px;background:#fafafa"><span class="l" style="top:10.0px">CP-20221229002</span></div>
<div class="c" style="left:1115px;top:442px;width:120px;height:40px;background:#fafafa"><span style="top:10.0px">脉动</span></div>
<div class="c" style="left:995px;top:482px;width:120px;height:40px;background:#fafafa"><span class="l" style="top:10.0px">CP-20221230002</span></div>
<div class="c" style="left:1115px;top:482px;width:120px;height:40px;background:#fafafa"><span style="top:10.0px">朗姆酒</span></div>
<div class="c" style="left:0px;top:522px;width:40px;height:80px;background:#fff"><span class="l" style="top:30.0px">5</span></div>
<div class="c" style="left:40px;top:522px;width:55px;height:80px;background:#fff"><i class="cb" style="left:10px;top:32.0px"></i></div>
<div class="c" style="left:95px;top:522px;width:180px;height:80px;background:#fff"><span class="l" style="top:30.0px">DB-20230328001</span></div>
<div class="c" style="left:275px;top:522px;width:180px;height:80px;background:#fff"><span style="top:30.0px">无代码助手</span></div>
<div class="c" style="left:455px;top:522px;width:180px;height:80px;background:#fff"><span class="l d" style="top:30.0px">2023-03-28</span></div>
<div class="c" style="left:635px;top:522px;width:180px;height:80px;background:#fff"><span style="top:30.0px">西安分仓库</span></div>
<div class="c" style="left:815px;top:522px;width:180px;height:80px;background:#fff"><span style="top:30.0px">深圳分仓库</span></div>
<div class="c" style="left:995px;top:522px;width:120px;height:40px;background:#fff"><span class="l" style="top:10.0px">CP-20221229001</span></div>
<div class="c" style="left:1115px;top:522px;width:120px;height:40px;background:#fff"><span style="top:10.0px">榛子蛋糕</span></div>
<div class="c" style="left:995px;top:562px;width:120px;height:40px;background:#fff"><span class="l" style="top:10.0px">CP-20221229002</span></div>
<div class="c" style="left:1115px;top:562px;width:120px;height:40px;background:#fff"><span style="top:10.0px">脉动</span></div>
</div>
<div class="abs" style="left:1399px;top:239px;width:14px;height:458px;background:#f8f8f9"></div>
<div class="abs" style="left:1403px;top:242px;width:8px;height:213px;border-radius:4px;background:#c1c1c1"></div>
<div class="abs" style="left:246px;top:697px;width:1167px;height:16px;background:#f8f9fb;border-top:1px solid #ebedf5;border-bottom:1px solid #ebedf5"></div>
<div class="abs" style="left:249px;top:701px;width:379px;height:8px;border-radius:4px;background:#c1c1c1"></div>
<div class="t" style="left:251px;top:728.5px;font-size:12.5px;color:#4a4a4a;font-weight:normal;letter-spacing:0.300px">共 8 条</div>
<div class="abs" style="left:306px;top:724px;width:100px;height:28px;border:1px solid #dcdfe8;border-radius:3px;background:#fff"></div>
<div class="t" style="left:324px;top:728.5px;font-size:12.5px;color:#4a4a4a;font-weight:normal;letter-spacing:0.700px">20条/页</div>
<div class="abs" style="left:389px;top:736px"><svg width="9" height="6" viewBox="0 0 9 6" style=""><path d="M1 1l3.500 3.500L8 1" fill="none" stroke="#c8ccd4" stroke-width="1"/></svg></div>
<div class="abs" style="left:431px;top:733px"><svg width="7" height="10" viewBox="0 0 7 10" style=""><path d="M6 1L1.500 5 6 9" fill="none" stroke="#c4c8d0" stroke-width="1.100"/></svg></div>
<div class="t" style="left:470px;top:728.5px;font-size:13px;color:#409eff;font-weight:bold;">1</div>
<div class="abs" style="left:509px;top:733px"><svg width="7" height="10" viewBox="0 0 7 10" style=""><path d="M1 1l4.500 4L1 9" fill="none" stroke="#c4c8d0" stroke-width="1.100"/></svg></div>
<div class="abs" style="left:1366px;top:680px;width:40px;height:50px;background:#fff;border-radius:7px;box-shadow:0 0 3px rgba(0,0,0,0.050)"></div>
<div class="abs" style="left:1377px;top:688.5px"><svg width="18" height="18" viewBox="0 0 18 18" style=""><rect x="0.900" y="0.900" width="6.400" height="6.400" fill="none" stroke="#f06a3c" stroke-width="1.600"/><rect x="10.500" y="0.900" width="6.400" height="6.400" fill="none" stroke="#f06a3c" stroke-width="1.600"/><rect x="0.900" y="10.500" width="6.400" height="6.400" fill="none" stroke="#f06a3c" stroke-width="1.600"/><rect x="10.500" y="10.500" width="6.400" height="6.400" fill="none" stroke="#f06a3c" stroke-width="1.600"/></svg></div>
<div class="abs" style="left:1397px;top:671px;width:30px;height:16px;border-radius:8px;background:#ee6b72;color:#fff;font-size:12px;font-weight:bold;line-height:16px;padding-left:5px">22</div>
<div class="t" style="left:1168px;top:703px;font-size:33px;line-height:36px;color:#fff;font-weight:400;letter-spacing:2px;text-shadow:2px 2px 0 #111,1px 1px 0 #333,0 0 1px #777">头条 @速融云</div>
<div class="t" style="left:1184px;top:697.500px;font-size:25px;line-height:36px;color:#050505;font-weight:bold;letter-spacing:0"><span style="font-family:'DejaVu Sans','Liberation Sans',sans-serif;font-size:22.500px;font-weight:bold;letter-spacing:-0.150px;margin-right:2px">www.rjtj.cn</span>软荐网</div>
</div>
</body>
</html>
